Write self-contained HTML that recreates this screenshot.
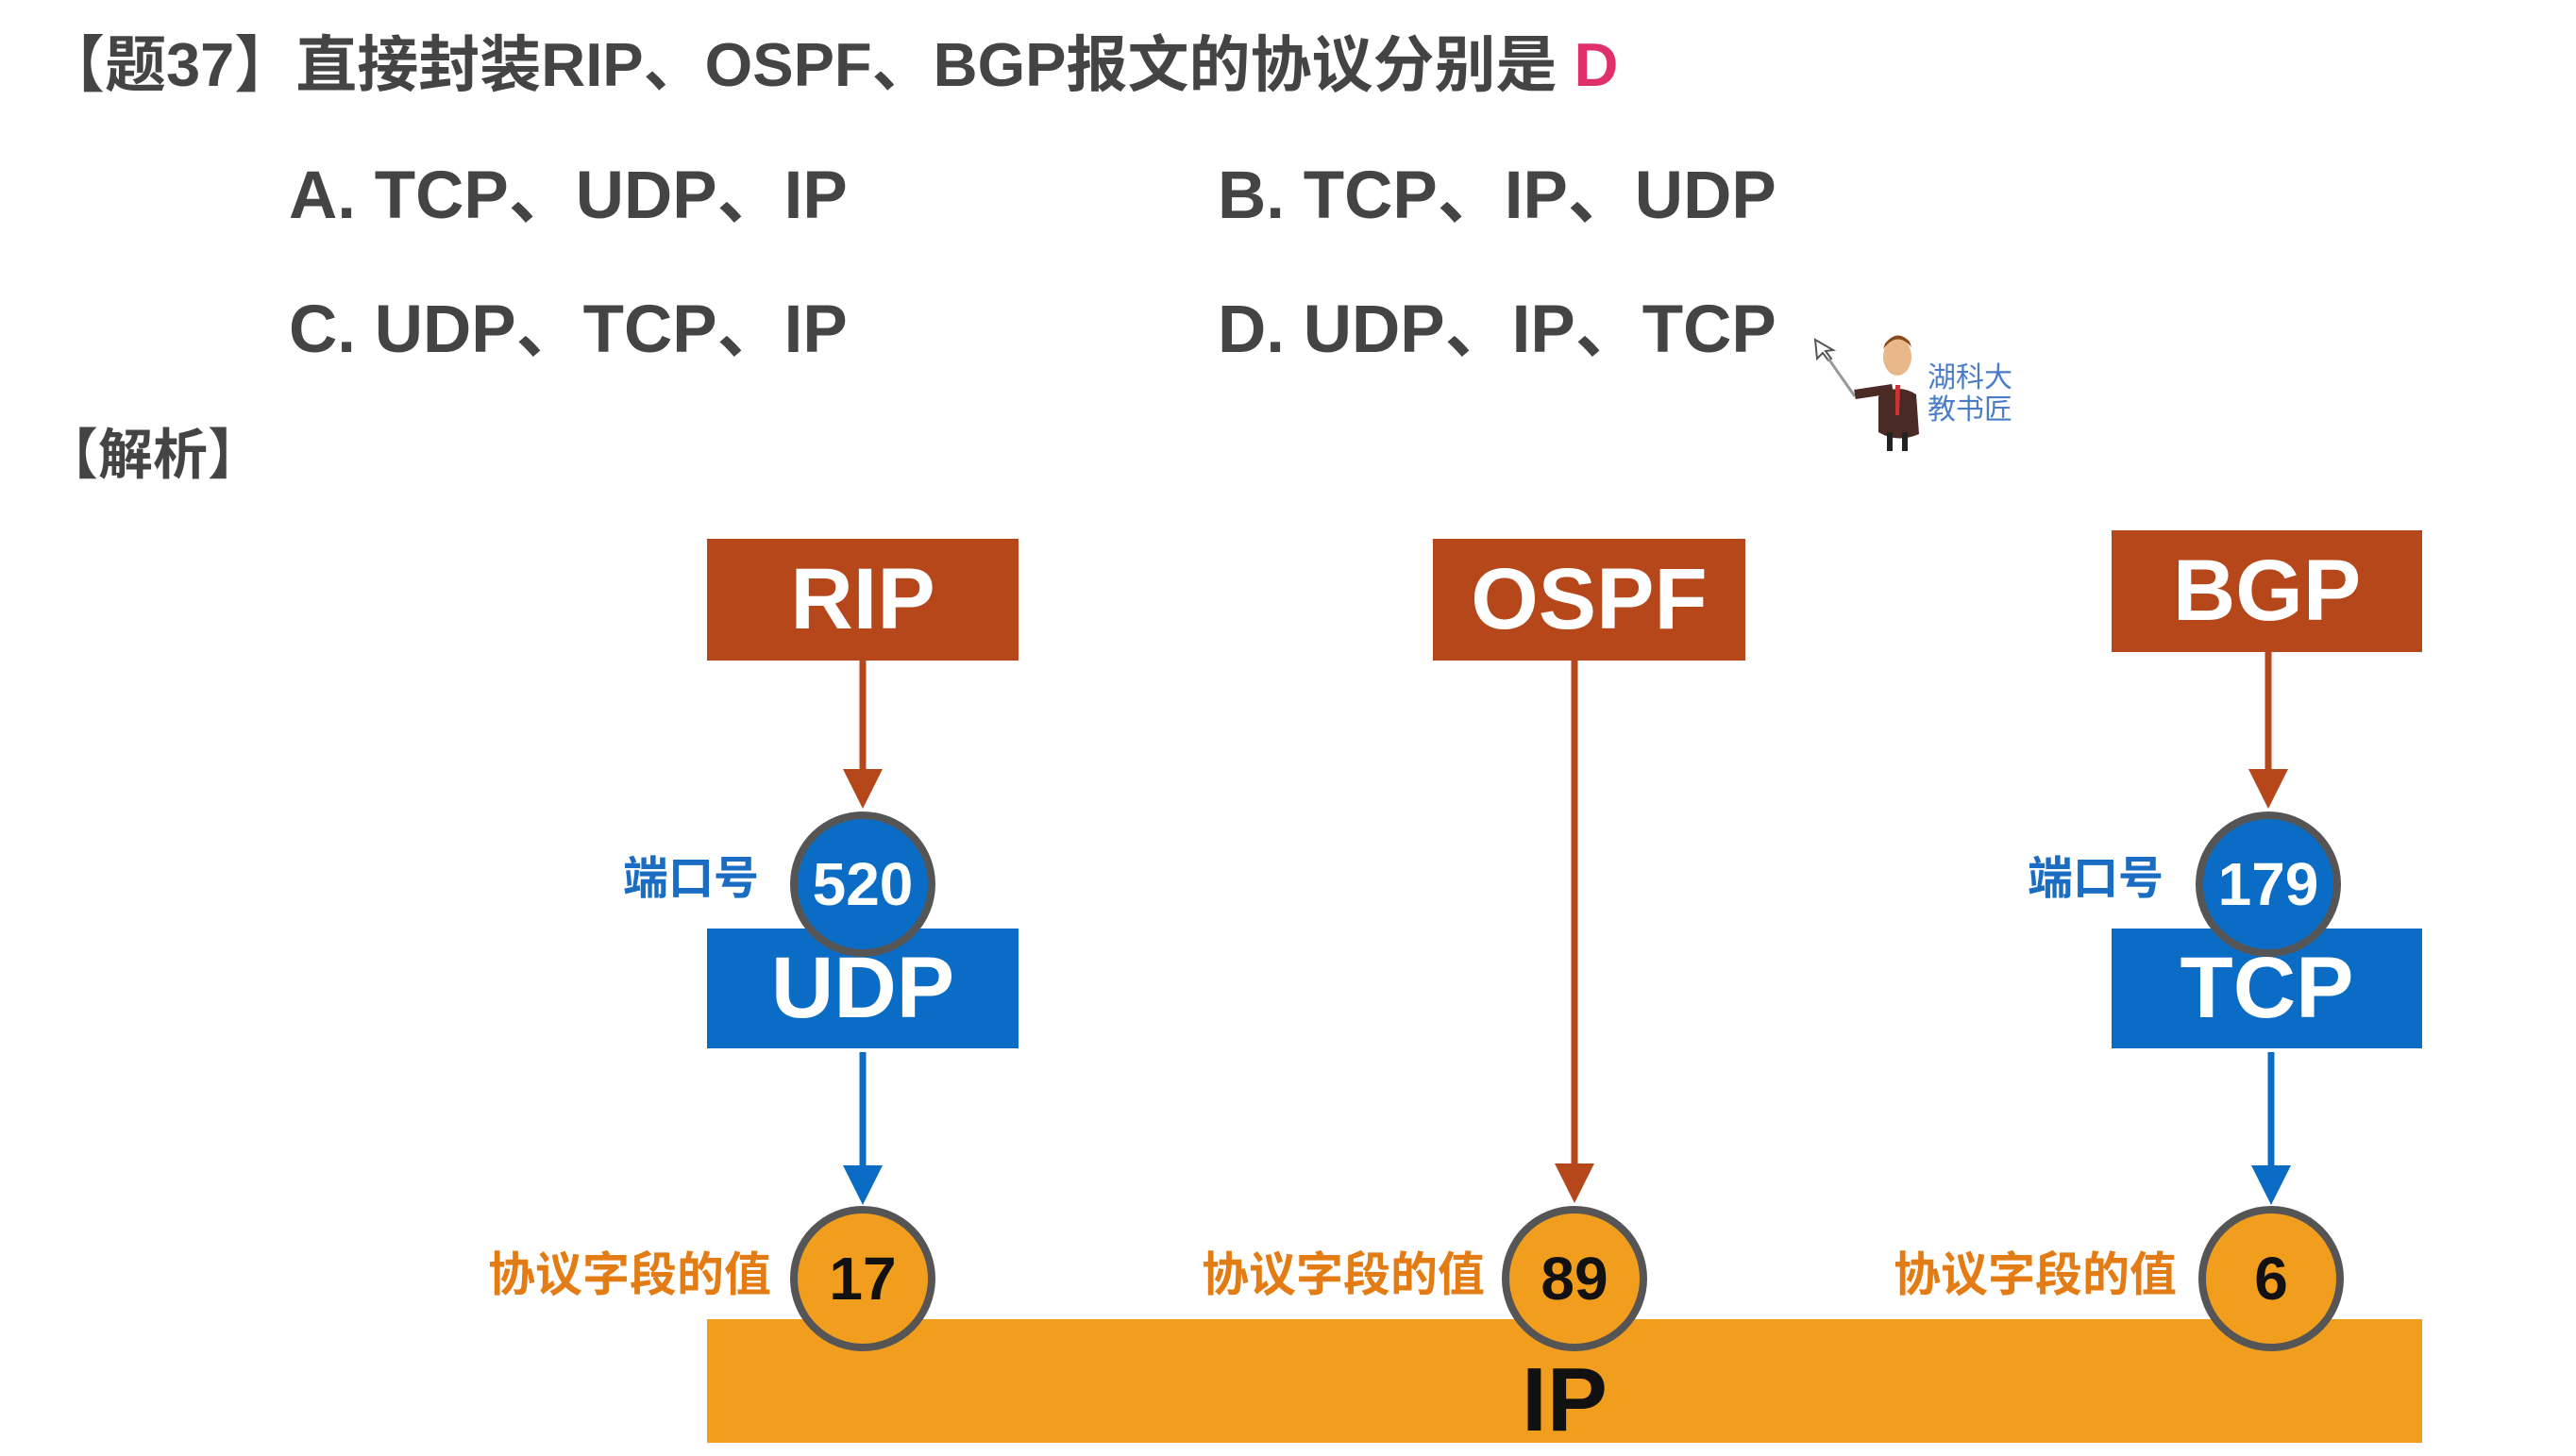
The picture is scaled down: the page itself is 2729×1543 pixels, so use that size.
<!DOCTYPE html>
<html><head><meta charset="utf-8"><style>
*{margin:0;padding:0}
body{width:2729px;height:1543px;background:#fff;position:relative;overflow:hidden;font-family:"Liberation Sans","Noto Sans CJK SC",sans-serif;font-weight:bold}
.t{position:absolute;white-space:nowrap;line-height:1}
.box{position:absolute;color:#fff;display:flex;align-items:center;justify-content:center;font-size:92px}
.br{background:#b5471b}.bl{background:#0b6cc6}
.c{position:absolute;width:138px;height:138px;border:8px solid #555;border-radius:50%;display:flex;align-items:center;justify-content:center;font-size:64px;box-sizing:content-box}
.lb{color:#1a6dc2;font-size:48px}
.lo{color:#e37c14;font-size:50px}
</style></head><body>
<div class="t" style="left:46px;top:36px;font-size:65px;color:#444">【题37】直接封装RIP、OSPF、BGP报文的协议分别是 <span style="color:#e0306a">D</span></div>
<div class="t" style="left:306px;top:172px;font-size:71px;color:#444">A. TCP、UDP、IP</div>
<div class="t" style="left:1290px;top:172px;font-size:71px;color:#444">B. TCP、IP、UDP</div>
<div class="t" style="left:306px;top:314px;font-size:71px;color:#444">C. UDP、TCP、IP</div>
<div class="t" style="left:1290px;top:314px;font-size:71px;color:#444">D. UDP、IP、TCP</div>
<div class="t" style="left:46px;top:454px;font-size:58px;color:#444">【解析】</div>

<svg style="position:absolute;left:1915px;top:350px" width="130" height="130" viewBox="0 0 130 130">
<path d="M8 10 L10 30 L16 24 L22 32 L25 30 L19 22 L27 21 Z" fill="#fff" stroke="#555" stroke-width="2"/>
<line x1="22" y1="30" x2="50" y2="70" stroke="#999" stroke-width="3"/>
<path d="M50 68 L90 62" stroke="#4a2a25" stroke-width="10"/>
<ellipse cx="95" cy="28" rx="15" ry="20" fill="#e8b88a"/>
<path d="M80 20 Q95 0 110 18 L108 12 Q95 -2 82 14Z" fill="#8a4a20"/>
<path d="M75 70 Q95 55 115 68 L118 110 Q95 120 75 108 Z" fill="#4a2a25"/>
<path d="M93 58 L98 58 L97 90 L93 90Z" fill="#c33"/>
<rect x="84" y="108" width="6" height="20" fill="#222"/><rect x="100" y="108" width="6" height="20" fill="#222"/>
</svg>
<div class="t" style="left:2042px;top:384px;font-size:30px;color:#4a7cc8;font-weight:normal;line-height:34px">湖科大<br>教书匠</div>

<svg style="position:absolute;left:0;top:0" width="2729" height="1543">
<defs>
<marker id="ab" markerWidth="6" markerHeight="6" refX="3" refY="3" orient="auto" markerUnits="strokeWidth"><path d="M0,0 L6,3 L0,6Z" fill="#b5471b"/></marker>
<marker id="aa" markerWidth="6" markerHeight="6" refX="3" refY="3" orient="auto" markerUnits="strokeWidth"><path d="M0,0 L6,3 L0,6Z" fill="#0b6cc6"/></marker>
</defs>
<line x1="914" y1="700" x2="914" y2="836" stroke="#b5471b" stroke-width="7" marker-end="url(#ab)"/>
<line x1="1668" y1="700" x2="1668" y2="1254" stroke="#b5471b" stroke-width="7" marker-end="url(#ab)"/>
<line x1="2403" y1="691" x2="2403" y2="836" stroke="#b5471b" stroke-width="7" marker-end="url(#ab)"/>
<line x1="914" y1="1115" x2="914" y2="1256" stroke="#0b6cc6" stroke-width="7" marker-end="url(#aa)"/>
<line x1="2406" y1="1115" x2="2406" y2="1256" stroke="#0b6cc6" stroke-width="7" marker-end="url(#aa)"/>
</svg>

<div class="box br" style="left:749px;top:571px;width:330px;height:129px">RIP</div>
<div class="box br" style="left:1518px;top:571px;width:331px;height:129px">OSPF</div>
<div class="box br" style="left:2237px;top:562px;width:329px;height:129px">BGP</div>
<div class="box bl" style="left:749px;top:984px;width:330px;height:127px">UDP</div>
<div class="box bl" style="left:2237px;top:984px;width:329px;height:127px">TCP</div>
<div class="box" style="left:749px;top:1398px;width:1817px;height:131px;background:#f19e1f;color:#111;font-size:96px;padding-top:40px;box-sizing:border-box">IP</div>

<div class="c" style="left:837px;top:860px;background:#0b6cc6;color:#fff">520</div>
<div class="c" style="left:2326px;top:860px;background:#0b6cc6;color:#fff">179</div>
<div class="c" style="left:837px;top:1278px;background:#f19e1f;color:#111">17</div>
<div class="c" style="left:1591px;top:1278px;background:#f19e1f;color:#111">89</div>
<div class="c" style="left:2329px;top:1278px;background:#f19e1f;color:#111">6</div>

<div class="t lb" style="left:660px;top:908px">端口号</div>
<div class="t lb" style="left:2148px;top:908px">端口号</div>
<div class="t lo" style="left:517px;top:1326px">协议字段的值</div>
<div class="t lo" style="left:1273px;top:1326px">协议字段的值</div>
<div class="t lo" style="left:2006px;top:1326px">协议字段的值</div>
</body></html>
